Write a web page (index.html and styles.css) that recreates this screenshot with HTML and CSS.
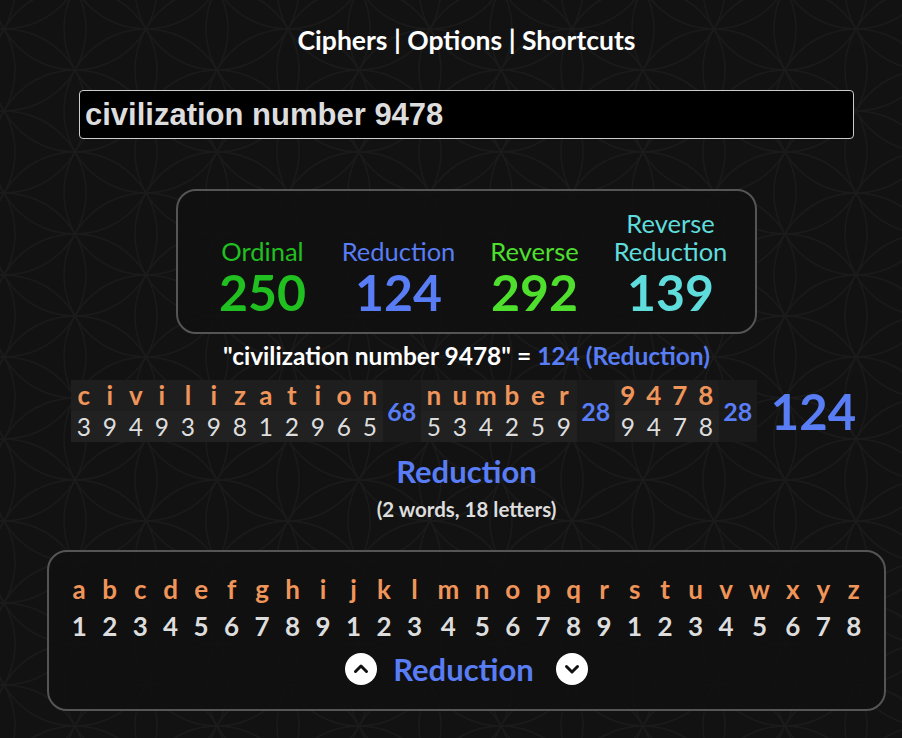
FILE: index.html
```html
<!DOCTYPE html>
<html lang="en">
<head>
  <meta charset="UTF-8">
  <meta name="viewport" content="width=device-width, initial-scale=1.0">
  <title>Gematria Calculator</title>
  <link rel="stylesheet" href="styles.css">
</head>
<body>
  <div class="page">
    <!-- Menu superior -->
    <div class="nav">Ciphers | Options | Shortcuts</div>

    <div class="search">
      <input type="text" class="phrase" value="civilization number 9478">
    </div>

    <!-- Resultados de los cifrados -->
    <div class="ciphers">
      <div class="cipher ordinal">
        <div class="cipher-name">Ordinal</div>
        <div class="cipher-value">250</div>
      </div>
      <div class="cipher reduction">
        <div class="cipher-name">Reduction</div>
        <div class="cipher-value">124</div>
      </div>
      <div class="cipher reverse">
        <div class="cipher-name">Reverse</div>
        <div class="cipher-value">292</div>
      </div>
      <div class="cipher rev-reduction">
        <div class="cipher-name">Reverse<br>Reduction</div>
        <div class="cipher-value">139</div>
      </div>
    </div>

    <div class="summary">"civilization number 9478" = <span class="blue">124 (Reduction)</span></div>

    <!-- Desglose por letras -->
    <div class="breakdown">
      <table class="word-table">
        <tr class="letters">
          <td>c</td><td>i</td><td>v</td><td>i</td><td>l</td><td>i</td><td>z</td><td>a</td><td>t</td><td>i</td><td>o</td><td>n</td>
          <td class="word-sum" rowspan="2">68</td>
          <td>n</td><td>u</td><td>m</td><td>b</td><td>e</td><td>r</td>
          <td class="word-sum" rowspan="2">28</td>
          <td>9</td><td>4</td><td>7</td><td>8</td>
          <td class="word-sum" rowspan="2">28</td>
        </tr>
        <tr class="numbers">
          <td>3</td><td>9</td><td>4</td><td>9</td><td>3</td><td>9</td><td>8</td><td>1</td><td>2</td><td>9</td><td>6</td><td>5</td>
          <td>5</td><td>3</td><td>4</td><td>2</td><td>5</td><td>9</td>
          <td>9</td><td>4</td><td>7</td><td>8</td>
        </tr>
      </table>
      <div class="total">124</div>
    </div>

    <div class="breakdown-title">Reduction</div>
    <div class="breakdown-count">(2 words, 18 letters)</div>

    <!-- Tabla del alfabeto -->
    <div class="chart">
      <div class="alphabet" id="alphabet"></div>
      <div class="chart-controls">
        <button class="circle-btn" aria-label="Previous">
          <svg width="32" height="32" viewBox="0 0 32 32"><circle cx="16" cy="16" r="16" fill="#fff"/><path d="M10.5 18.5 L16 13 L21.5 18.5" fill="none" stroke="#111" stroke-width="3" stroke-linecap="round" stroke-linejoin="round"/></svg>
        </button>
        <span class="chart-name">Reduction</span>
        <button class="circle-btn next" aria-label="Next">
          <svg width="32" height="32" viewBox="0 0 32 32"><circle cx="16" cy="16" r="16" fill="#fff"/><path d="M10.5 13.5 L16 19 L21.5 13.5" fill="none" stroke="#111" stroke-width="3" stroke-linecap="round" stroke-linejoin="round"/></svg>
        </button>
      </div>
    </div>
  </div>

  <script>
    // Construir la tabla del alfabeto
    const letters = 'abcdefghijklmnopqrstuvwxyz';
    const alphabet = document.getElementById('alphabet');
    let row1 = '';
    let row2 = '';
    for (let i = 0; i < letters.length; i++) {
      row1 += '<span class="a-letter">' + letters[i] + '</span>';
      row2 += '<span class="a-number">' + ((i % 9) + 1) + '</span>';
    }
    alphabet.innerHTML = row1 + row2;
  </script>
</body>
</html>
```

FILE: styles.css
```css
/* Estilos generales */
body {
  margin: 0;
  padding: 0;
  font-family: 'Lato', 'Noto Sans', sans-serif;
  color: #ddd;
  background-color: #121212;
  background-image: url("data:image/svg+xml,%3Csvg xmlns='http://www.w3.org/2000/svg' width='142' height='82'%3E%3Cg fill='none' stroke='%231a1a1a' stroke-width='1.4'%3E%3Ccircle cx='0' cy='-82' r='82'/%3E%3Ccircle cx='0' cy='0' r='82'/%3E%3Ccircle cx='0' cy='82' r='82'/%3E%3Ccircle cx='0' cy='164' r='82'/%3E%3Ccircle cx='142' cy='-82' r='82'/%3E%3Ccircle cx='142' cy='0' r='82'/%3E%3Ccircle cx='142' cy='82' r='82'/%3E%3Ccircle cx='142' cy='164' r='82'/%3E%3Ccircle cx='-71' cy='-41' r='82'/%3E%3Ccircle cx='-71' cy='41' r='82'/%3E%3Ccircle cx='-71' cy='123' r='82'/%3E%3Ccircle cx='71' cy='-41' r='82'/%3E%3Ccircle cx='71' cy='41' r='82'/%3E%3Ccircle cx='71' cy='123' r='82'/%3E%3Ccircle cx='213' cy='-41' r='82'/%3E%3Ccircle cx='213' cy='41' r='82'/%3E%3Ccircle cx='213' cy='123' r='82'/%3E%3C/g%3E%3C/svg%3E");
  background-position: 4px 29px;
}

.page {
  padding: 24px 0 0 31px;
  display: flex;
  flex-direction: column;
  align-items: center;
  text-align: center;
}

.blue {
  color: #587df5;
}

/* Menu */
.nav {
  font-size: 26.5px;
  font-weight: bold;
  color: #fff;
  line-height: 32px;
}

/* Caja de texto */
.search {
  margin-top: 34px;
}

.phrase {
  box-sizing: border-box;
  width: 775px;
  height: 49px;
  padding: 0 5px;
  background: #000;
  border: 1px solid #ccc;
  border-radius: 4px;
  color: #ddd;
  font-family: 'Liberation Sans', Arial, sans-serif;
  font-weight: bold;
  font-size: 31px;
  outline: none;
}

/* Cifrados */
.ciphers {
  margin-top: 50px;
  box-sizing: border-box;
  width: 581px;
  height: 145px;
  padding: 14px 0 0;
  border: 2px solid #555;
  border-radius: 20px;
  background: rgba(16, 16, 16, 0.88);
  display: flex;
  justify-content: center;
  align-items: flex-end;
}

.cipher {
  width: 136px;
}

.cipher-name {
  font-size: 25.5px;
  line-height: 28px;
}

.cipher-value {
  font-size: 50px;
  font-weight: bold;
  line-height: 54px;
  margin-bottom: 13px;
}

.ordinal { color: #20c020; }
.reduction { color: #587df5; }
.reverse { color: #4fe02e; }
.rev-reduction { color: #5fdcdc; }

.summary {
  margin-top: 7px;
  font-size: 24.5px;
  font-weight: bold;
  color: #fff;
  line-height: 30px;
}

/* Desglose */
.breakdown {
  margin-top: 9px;
  margin-right: 6px;
  display: flex;
  align-items: center;
  gap: 14px;
}

.word-table {
  border-collapse: collapse;
  background: #1e1e1e;
}

.word-table td {
  width: 26px;
  padding: 0;
  text-align: center;
  height: 31px;
}

.letters td {
  color: #f0955a;
  font-size: 26px;
  font-weight: bold;
  line-height: 31px;
}

.numbers td {
  background: #212121;
  color: #ddd;
  font-size: 24.5px;
  line-height: 31px;
}

.word-table .word-sum {
  width: 38px;
  background: #1a1a1a;
  color: #587df5;
  font-size: 25px;
  font-weight: bold;
}

.total {
  font-size: 49px;
  font-weight: bold;
  color: #587df5;
  line-height: 60px;
}

.breakdown-title {
  margin-top: 11px;
  font-size: 31px;
  font-weight: bold;
  color: #587df5;
  line-height: 36px;
}

.breakdown-count {
  margin-top: 8px;
  font-size: 20.5px;
  font-weight: bold;
  color: #ddd;
  line-height: 24px;
}

/* Tabla del alfabeto */
.chart {
  margin-top: 29px;
  box-sizing: border-box;
  width: 839px;
  height: 161px;
  padding-top: 19px;
  border: 2px solid #555;
  border-radius: 20px;
  background: rgba(16, 16, 16, 0.88);
}

.alphabet {
  display: grid;
  grid-template-columns: repeat(26, auto);
  justify-content: center;
  column-gap: 15.4px;
  font-size: 26px;
  font-weight: bold;
  line-height: 37px;
}

.a-letter {
  color: #f0955a;
}

.a-number {
  color: #ddd;
}

.chart-controls {
  margin-top: 6px;
  display: flex;
  justify-content: center;
  align-items: center;
  gap: 16px;
}

.circle-btn {
  width: 32px;
  height: 32px;
  padding: 0;
  border: none;
  background: none;
  cursor: pointer;
  display: flex;
}

.circle-btn.next {
  margin-left: 6px;
}

.chart-name {
  font-size: 31px;
  font-weight: bold;
  color: #587df5;
  line-height: 36px;
}
```
